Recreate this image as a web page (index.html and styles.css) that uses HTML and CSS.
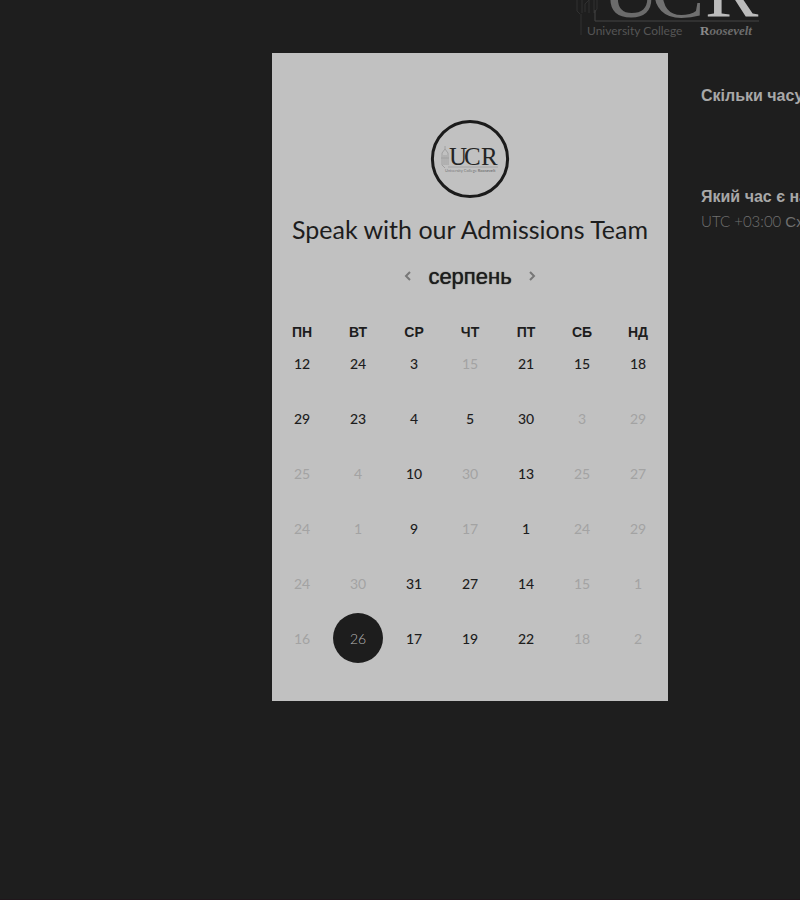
FILE: index.html
```html
<!DOCTYPE html>
<html lang="uk">
<head>
<meta charset="utf-8">
<meta name="viewport" content="width=device-width, initial-scale=1">
<title>Speak with our Admissions Team</title>
<link rel="stylesheet" href="styles.css">
</head>
<body>
<header class="site-header">
  <svg class="site-logo" viewBox="0 0 192 40" role="img" aria-label="University College Roosevelt">
    <g fill="none" stroke="#303030">
      <path d="M2 0v11l3 3M7 0v13M10 12V4l4-4M14 0v13M19 0v13l3-4V0M6 14v21"/>
      <path stroke="#444" d="M20 10v11h164"/>
    </g>
    <g class="logo-letters">
      <text x="27" y="17" fill="#6b6b6b">U</text>
      <text x="76" y="17" fill="#707070">C</text>
      <text x="130" y="17" fill="#bcbcbc">R</text>
    </g>
    <text class="logo-name" x="12" y="35">University College</text>
    <text class="logo-roosevelt" x="125" y="35"><tspan class="upright">R</tspan>oosevelt</text>
  </svg>
</header>
<main class="booking">
  <section class="card">
    <svg class="avatar" viewBox="0 0 80 80" role="img" aria-label="UCR">
      <circle cx="40" cy="40" r="37.6" fill="none" stroke="#1b1b1b" stroke-width="3"/>
      <path d="M12 46V34l3-4 3 4v12M14 46V36M16 46V36M11 39h8M12 46l3 3M15 30v-3" fill="none" stroke="#a0a0a0"/>
      <g class="avatar-letters">
        <text x="19" y="46">U</text>
        <text x="34" y="46">C</text>
        <text x="51" y="46">R</text>
      </g>
      <path d="M18 48h50" stroke="#a5a5a5"/>
      <text class="avatar-name" x="15" y="53">University College <tspan class="avatar-bold">Roosevelt</tspan></text>
    </svg>
    <h1 class="title">Speak with our Admissions Team</h1>
    <div class="month">
      <button class="arrow" type="button" aria-label="Попередній місяць"><svg viewBox="0 0 8 12"><path d="M6 2 2 6l4 4"/></svg></button>
      <h2 class="month-name">серпень</h2>
      <button class="arrow" type="button" aria-label="Наступний місяць"><svg viewBox="0 0 8 12"><path d="m2 2 4 4-4 4"/></svg></button>
    </div>
    <table class="calendar">
      <thead><tr><th>ПН</th><th>ВТ</th><th>СР</th><th>ЧТ</th><th>ПТ</th><th>СБ</th><th>НД</th></tr></thead>
      <tbody>
        <tr><td><button>12</button></td><td><button>24</button></td><td><button>3</button></td><td><button disabled>15</button></td><td><button>21</button></td><td><button>15</button></td><td><button>18</button></td></tr>
        <tr><td><button>29</button></td><td><button>23</button></td><td><button>4</button></td><td><button>5</button></td><td><button>30</button></td><td><button disabled>3</button></td><td><button disabled>29</button></td></tr>
        <tr><td><button disabled>25</button></td><td><button disabled>4</button></td><td><button>10</button></td><td><button disabled>30</button></td><td><button>13</button></td><td><button disabled>25</button></td><td><button disabled>27</button></td></tr>
        <tr><td><button disabled>24</button></td><td><button disabled>1</button></td><td><button>9</button></td><td><button disabled>17</button></td><td><button>1</button></td><td><button disabled>24</button></td><td><button disabled>29</button></td></tr>
        <tr><td><button disabled>24</button></td><td><button disabled>30</button></td><td><button>31</button></td><td><button>27</button></td><td><button>14</button></td><td><button disabled>15</button></td><td><button disabled>1</button></td></tr>
        <tr><td><button disabled>16</button></td><td><button class="selected" aria-pressed="true">26</button></td><td><button>17</button></td><td><button>19</button></td><td><button>22</button></td><td><button disabled>18</button></td><td><button disabled>2</button></td></tr>
      </tbody>
    </table>
  </section>
  <aside class="details">
    <h3>Скільки часу</h3>
    <h3>Який час є на</h3>
    <p>UTC +03:00 <b>Сх</b></p>
  </aside>
</main>
</body>
</html>
```
FILE: styles.css
```css
* { box-sizing: border-box; }

body {
  margin: 0;
  min-height: 100vh;
  overflow-x: hidden;
  background: #1e1e1e;
  border-bottom: 1px solid #20161b;
  color: #1d1d1d;
  font-family: Lato, "Liberation Sans", sans-serif;
}

h1, h2, h3, p { margin: 0; }

.site-header {
  display: flex;
  justify-content: flex-end;
  height: 53px;
  padding-right: 33px;
}

.site-logo { width: 192px; height: 40px; }
.logo-letters { font: 80px "Liberation Serif", serif; }
.logo-name { font: 12px Lato, sans-serif; fill: #555; }
.logo-roosevelt { font: italic bold 13px "Liberation Serif", serif; fill: #6c6c6c; }
.upright { font-style: normal; fill: #8a8a8a; }

.booking {
  display: grid;
  grid-template-columns: 34% minmax(0, 396px) 1fr;
}

.card {
  grid-column: 2;
  display: flex;
  flex-direction: column;
  align-items: center;
  padding: 66px 2px 33px;
  background: #c1c1c1;
}

.avatar { width: 80px; height: 80px; }
.avatar-letters { font: 25px "Liberation Serif", serif; fill: #242424; }
.avatar-name { font: 4px Lato, sans-serif; fill: #777; }
.avatar-bold { font-weight: bold; }

.title {
  margin-top: 15px;
  font-size: 25px;
  font-weight: 400;
  line-height: 30px;
  white-space: nowrap;
}

.month {
  display: flex;
  align-items: center;
  gap: 12px;
  margin-top: 17px;
}

.month-name {
  font: 22px/32px "Liberation Sans", sans-serif;
  text-shadow: 0 0 1px #1d1d1d;
}

button {
  padding: 0;
  border: 0;
  background: none;
  color: inherit;
  font: inherit;
}

.arrow { width: 16px; height: 24px; margin-bottom: 4px; }
.arrow svg { width: 8px; height: 12px; }
.arrow path { fill: none; stroke: #777; stroke-width: 2; }

.calendar {
  width: 100%;
  margin-top: 33px;
  border-collapse: collapse;
  table-layout: fixed;
}

.calendar th {
  padding: 0;
  font: bold 14px/12px "Liberation Sans", sans-serif;
}

.calendar td {
  height: 55px;
  padding: 0;
  text-align: center;
  vertical-align: top;
}

.calendar td button {
  width: 50px;
  height: 50px;
  border-radius: 50%;
  font-size: 14px;
  font-weight: 500;
}

.calendar td button:disabled { color: #a3a3a3; font-weight: 400; }
.calendar td .selected { background: #1d1d1d; color: #b5b5b5; font-weight: 300; }

.details {
  padding: 33px 0 0 33px;
  min-width: 0;
  overflow: hidden;
  white-space: nowrap;
  color: #a8a8a8;
}

.details h3 { font: bold 16px/20px "Liberation Sans", sans-serif; }
.details h3 + h3 { margin-top: 81px; }
.details p { margin-top: 4px; color: #707070; font-size: 15px; font-weight: 300; line-height: 20px; }
.details b { font-family: "Liberation Sans", sans-serif; }
```
